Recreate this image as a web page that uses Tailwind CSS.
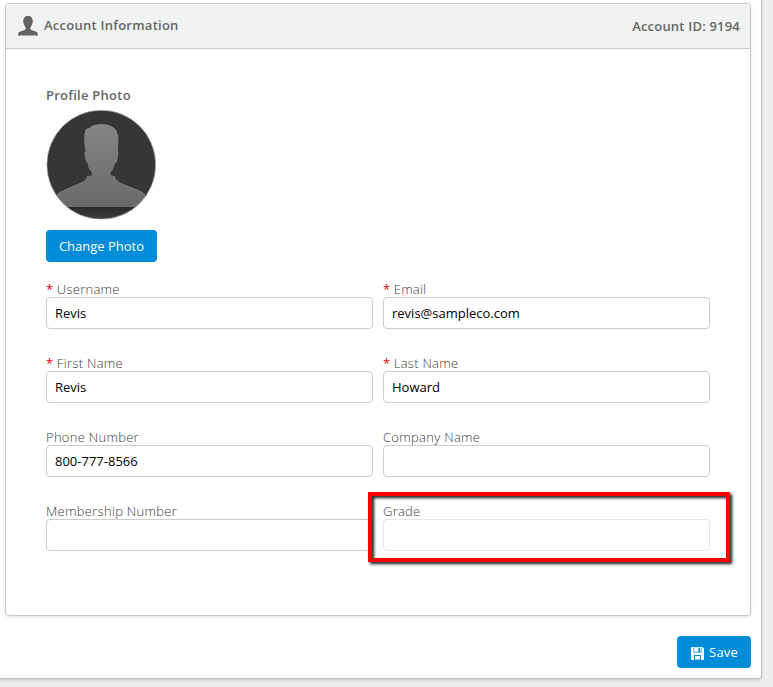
<!DOCTYPE html>
<html lang="en">
<head>
<meta charset="utf-8">
<title>Account Information</title>
<script src="https://cdn.jsdelivr.net/npm/@tailwindcss/browser@4"></script>
</head>
<body class="h-[687px] w-[773px] overflow-hidden bg-[#eeeeee] font-['Open_Sans','Noto_Sans',sans-serif] text-[13px] leading-[18px] text-[#666]">
<main class="h-[679px] w-[762px] rounded-br-[4px] border-r border-b border-[#bfbfbf] bg-white pt-[3px] pl-[5px] shadow-[0_1px_3px_rgba(0,0,0,0.15)]">
  <section class="h-[613px] w-[746px] rounded-[4px] border border-[#c6c8c8] shadow-[0_1px_3px_rgba(0,0,0,0.13)]">
    <header class="flex h-[45px] items-center justify-between rounded-t-[3px] border-b border-[#cccccc] bg-[#f1f3f2] pr-[10px] pl-3 font-semibold">
      <div class="flex items-center">
        <svg class="mr-[6px] h-5 w-5" viewBox="0 0 20 20" fill="#626562"><path d="M10 0C6.800 0 5.200 2.100 5.400 4.900C4.900 5.200 5 6.500 5.700 7.200C6 9 6.700 10.300 7.600 11.200V13.300C6.600 14.700 1.500 15 .4 17.100C0 17.900 0 18.800 0 19.600H20C20 18.800 20 17.900 19.600 17.100C18.500 15 13.400 14.700 12.400 13.300V11.200C13.300 10.300 14 9 14.300 7.200C15 6.500 15.100 5.200 14.600 4.900C14.800 2.100 13.200 0 10 0Z"/></svg>
        <h1 class="pb-[2px] tracking-[0.25px]">Account Information</h1>
      </div>
      <span class="tracking-[0.2px]">Account ID: 9194</span>
    </header>
    <div class="px-10 pt-[37px]">
      <h2 class="font-semibold tracking-[0.25px]">Profile Photo</h2>
      <svg class="mt-[6px] block h-[110px] w-[110px]" viewBox="0 0 110 110">
        <defs>
          <linearGradient id="person" x2="0" y2="1"><stop stop-color="#858585"/><stop offset="1" stop-color="#696969"/></linearGradient>
          <linearGradient id="floor" x2="0" y2="1"><stop stop-color="#292929"/><stop offset="1" stop-color="#414141"/></linearGradient>
          <clipPath id="round"><circle cx="55.300" cy="54.700" r="54.400"/></clipPath>
        </defs>
        <g clip-path="url(#round)">
          <rect width="110" height="110" fill="#363636"/>
          <rect y="97" width="110" height="13" fill="url(#floor)"/>
          <path d="M11 97V85C12 83 15 82 19 80L35 73C39 71 41 70 41.500 66L46 65.500L45.500 62C43 60 42 57 41.500 53C39 51 38.500 47 38.500 42L39.500 41C38 35 37.500 28 39 21C40 18 42 18.500 43.500 18C46 15 50 14 55 14C65 14 71 18 72 25C73 31 72 36 72 41C73 43 72 48 71 52L68.500 54C68 58 67 60 65 62L64.500 65L68.500 66C69 70 72 72 76 74L91 80C95 82 98 83 99 85V97Z" fill="url(#person)" stroke="#2b2b2b" stroke-opacity=".3" stroke-width="2" paint-order="stroke"/>
          <path d="M11 85C12 83 15 82 19 80L35 73C39 71 41 70 41.500 66M68.500 66C69 70 72 72 76 74L91 80C95 82 98 83 99 85" fill="none" stroke="#929292" stroke-width=".7"/>
        </g>
        <circle cx="55.300" cy="54.700" r="54.500" fill="none" stroke="#b5b5b5" stroke-width=".7"/>
      </svg>
      <button class="mt-[10px] block h-8 w-[111px] rounded-[4px] bg-[#008cd8] text-white">Change Photo</button>
      <form class="mt-[18px] grid w-[664px] grid-cols-2 gap-x-[10px] text-[#3c3c3c]">
        <label class="flex h-[74px] flex-col"><span class="h-[17px] font-light tracking-[0.27px]"><span class="font-normal tracking-normal text-red-600">*</span> Username</span><input value="Revis" class="h-8 w-full rounded-[4px] border border-[#cccccc] bg-white px-2 text-black"></label>
        <label class="flex h-[74px] flex-col"><span class="h-[17px] font-light tracking-[0.2px]"><span class="font-normal tracking-normal text-red-600">*</span> Email</span><input value="revis@sampleco.com" class="h-8 w-full rounded-[4px] border border-[#cccccc] bg-white px-2 text-black"></label>
        <label class="flex h-[74px] flex-col"><span class="h-[17px] font-light tracking-[0.3px]"><span class="font-normal tracking-normal text-red-600">*</span> First Name</span><input value="Revis" class="h-8 w-full rounded-[4px] border border-[#cccccc] bg-white px-2 text-black"></label>
        <label class="flex h-[74px] flex-col"><span class="h-[17px] font-light tracking-[0.25px]"><span class="font-normal tracking-normal text-red-600">*</span> Last Name</span><input value="Howard" class="h-8 w-full rounded-[4px] border border-[#cccccc] bg-white px-2 text-black"></label>
        <label class="flex h-[74px] flex-col"><span class="h-[17px] font-light tracking-[0.28px]">Phone Number</span><input value="800-777-8566" class="h-8 w-full rounded-[4px] border border-[#cccccc] bg-white px-2 text-black"></label>
        <label class="flex h-[74px] flex-col"><span class="h-[17px] font-light tracking-[0.3px]">Company Name</span><input class="h-8 w-full rounded-[4px] border border-[#cccccc] bg-white px-2 text-black"></label>
        <label class="flex h-[74px] flex-col"><span class="h-[17px] font-light tracking-[0.3px]">Membership Number</span><input class="h-8 w-full rounded-[4px] border border-[#cccccc] bg-white px-2 text-black"></label>
        <label class="relative flex h-[74px] flex-col"><span class="h-[17px] font-light tracking-[0.25px]">Grade</span><input disabled class="h-8 w-full rounded-[4px] border border-[#e5e5e5] bg-white px-2 text-black"><span class="pointer-events-none absolute -top-[10px] -left-[15px] h-[70px] w-[362px] border-4 border-[#ff0000] drop-shadow-[2px_2px_1.5px_rgba(0,0,0,0.9)]"></span></label>
      </form>
    </div>
  </section>
  <div class="mt-5 flex w-[746px] justify-end">
    <button class="flex h-8 w-[74px] items-center rounded-[4px] bg-[#008cd8] pl-[14px] text-white">
      <svg class="mt-[2px] mr-[5px] h-[13px] w-[13px]" viewBox="0 0 13 13"><path d="M1 0H11.500L13 1.500V12Q13 13 12 13H1Q0 13 0 12V1Q0 0 1 0Z" fill="white"/><path d="M2.500 .7H10.500V5.500H2.500ZM3 8H10V13H3Z" fill="#008cd8"/><path d="M3.200 .7H7.400V4.800H3.200ZM9 .7H9.800V4.800H9ZM4 9H9V12.500H4Z" fill="white"/></svg>
      <span class="tracking-[0.25px]">Save</span>
    </button>
  </div>
</main>
</body>
</html>
